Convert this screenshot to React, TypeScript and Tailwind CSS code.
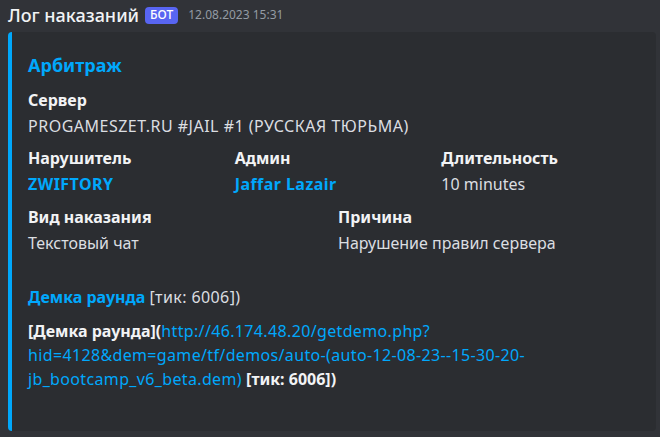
export default function App() {
  return (
    <div className="w-[660px] h-[437px] overflow-hidden bg-[#313338] font-['Noto_Sans',sans-serif] text-[#dbdee1]">
      {/* header */}
      <div className="flex items-center h-[30px] pl-2">
        <span className="text-[18px] font-medium text-[#f2f3f5] leading-none">Лог наказаний</span>
        <span className="ml-[6px] bg-[#5865f2] text-white text-[12px] font-medium rounded-[4px] px-[5px] h-[17px] flex items-center leading-none">
          БОТ
        </span>
        <span className="ml-[10px] text-[12px] text-[#949ba4]">12.08.2023 15:31</span>
      </div>

      {/* embed */}
      <div className="ml-2 mr-1 mt-[2px] h-[399px] bg-[#2b2d31] border-l-4 border-[#00a8fc] rounded-[4px] pl-4 pr-4 pt-[21px]">
        <div className="text-[18px] font-bold text-[#00a8fc] leading-[24px]">Арбитраж</div>

        <div className="mt-[12px]">
          <div className="text-[16px] font-bold text-[#f2f3f5] leading-[22px]">Сервер</div>
          <div className="text-[16px] leading-[30px] tracking-[0.5px]">PROGAMESZET.RU #JAIL #1 (РУССКАЯ ТЮРЬМА)</div>
        </div>

        <div className="grid grid-cols-3 w-[620px] mt-[6px]">
          <Field name="Нарушитель" value="ZWIFTORY" link />
          <Field name="Админ" value="Jaffar Lazair" link />
          <Field name="Длительность" value="10 minutes" />
        </div>

        <div className="grid grid-cols-2 w-[620px] mt-[7px]">
          <Field name="Вид наказания" value="Текстовый чат" />
          <Field name="Причина" value="Нарушение правил сервера" />
        </div>

        <div className="mt-[27px] text-[16px] leading-[24px]">
          <span className="font-bold text-[#00a8fc]">Демка раунда</span>{" "}
          <span className="tracking-[0.4px]">[тик: 6006])</span>
        </div>

        <div className="mt-[10px] text-[16px] leading-[24px] w-[580px]">
          <span className="font-bold text-[#f2f3f5]">[Демка раунда](</span>
          <span className="text-[#00a8fc] tracking-[0.35px]">
            http://46.174.48.20/getdemo.php?
            <br />
            hid=4128&amp;dem=game/tf/demos/auto-(auto-12-08-23--15-30-20-
            <br />
            jb_bootcamp_v6_beta.dem)
          </span>{" "}
          <span className="font-bold text-[#f2f3f5]">[тик: 6006])</span>
        </div>
      </div>
    </div>
  );
}

function Field({ name, value, link }: { name: string; value: string; link?: boolean }) {
  return (
    <div>
      <div className="text-[16px] font-bold text-[#f2f3f5] leading-[22px]">{name}</div>
      <div
        className={
          link
            ? "text-[16px] font-bold text-[#00a8fc] leading-[30px] tracking-[0.45px]"
            : "text-[16px] leading-[30px]"
        }
      >
        {value}
      </div>
    </div>
  );
}
